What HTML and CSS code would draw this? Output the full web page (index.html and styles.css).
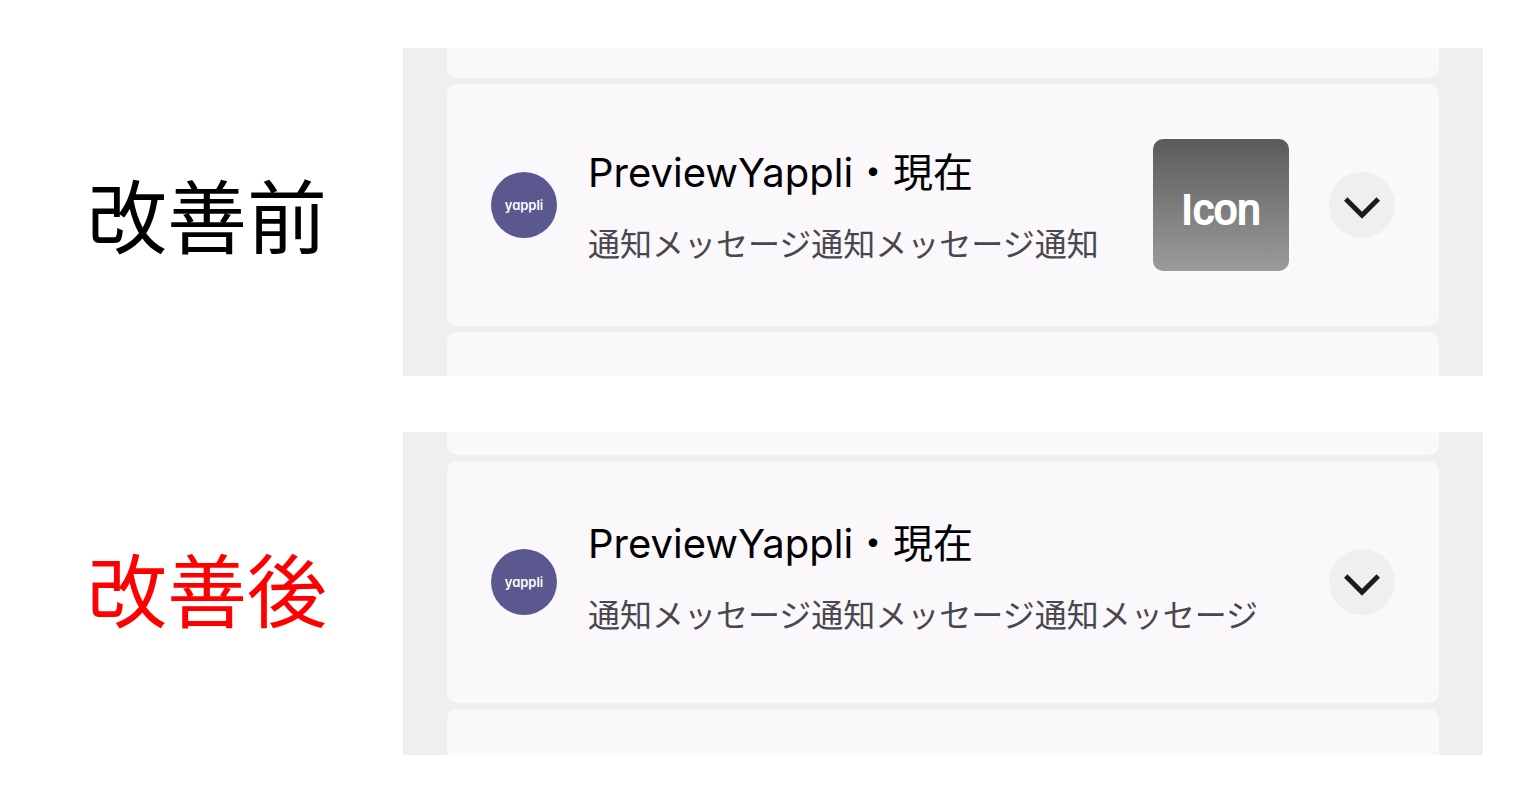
FILE: index.html
```html
<!DOCTYPE html>
<html lang="ja">
<head>
<meta charset="utf-8">
<title>改善前・改善後</title>
<link rel="stylesheet" href="styles.css">
</head>
<body>
<main class="comparison">
  <section class="case case-before">
    <h2 class="label">改善前</h2>
    <div class="panel">
      <div class="stub stub-top"></div>
      <article class="card">
        <span class="avatar">yappli</span>
        <div class="texts">
          <h3 class="title">PreviewYappli・現在</h3>
          <p class="message">通知メッセージ通知メッセージ通知</p>
        </div>
        <div class="thumb">Icon</div>
        <button class="expand" type="button" aria-label="展開">
          <svg class="chevron" viewBox="0 0 36 22"><path d="M1.700 2 18 18.300 34.300 2"/></svg>
        </button>
      </article>
      <div class="stub stub-bottom"></div>
    </div>
  </section>
  <section class="case case-after">
    <h2 class="label">改善後</h2>
    <div class="panel">
      <div class="stub stub-top"></div>
      <article class="card">
        <span class="avatar">yappli</span>
        <div class="texts">
          <h3 class="title">PreviewYappli・現在</h3>
          <p class="message">通知メッセージ通知メッセージ通知メッセージ</p>
        </div>
        <button class="expand" type="button" aria-label="展開">
          <svg class="chevron" viewBox="0 0 36 22"><path d="M1.700 2 18 18.300 34.300 2"/></svg>
        </button>
      </article>
      <div class="stub stub-bottom"></div>
    </div>
  </section>
</main>
</body>
</html>
```
FILE: styles.css
```css
* { box-sizing: border-box; }
body {
  margin: 0;
  background: #fff;
  color: #000;
  font-family: Inter, "Noto Sans CJK JP", sans-serif;
}
.comparison {
  display: flex;
  flex-direction: column;
  gap: 56px;
  padding: 48px 46px 56px 87px;
}
.case {
  display: grid;
  grid-template-columns: 316px 1fr;
}
.label {
  margin: 0;
  font-size: 80px;
  line-height: 96px;
  font-weight: 400;
  padding-top: 122px;
}
.case-after .label { color: #f00; padding-top: 112px; }
.panel {
  display: flex;
  flex-direction: column;
  gap: 6px;
  padding: 0 44px;
  background: #f0eef1;
}
.stub, .card { background: #faf8fb; }
.stub-top { height: 30px; border-radius: 0 0 10px 10px; }
.stub-bottom { height: 44px; border-radius: 10px 10px 0 0; }
.case-after .stub-top { height: 23px; }
.case-after .stub-bottom { height: 46px; }
.card {
  display: flex;
  align-items: center;
  min-height: 242px;
  padding: 0 44px;
  border-radius: 10px;
}
.avatar {
  flex: none;
  display: grid;
  place-items: center;
  width: 66px;
  height: 66px;
  margin-right: 31px;
  border-radius: 50%;
  background: #5b578f;
  color: #fff;
  font-size: 13px;
  line-height: 16px;
  font-weight: 600;
  font-feature-settings: "cv11";
}
.texts { flex: 1; min-width: 0; padding-top: 8px; }
.case-after .texts { padding: 0 0 4px; }
.title {
  margin: 0;
  font-size: 40px;
  line-height: 56px;
  font-weight: 400;
}
.message {
  margin: 16px 0 0;
  color: #49474e;
  font-size: 32px;
  line-height: 56px;
  white-space: nowrap;
}
.thumb {
  flex: none;
  display: grid;
  place-items: center;
  width: 136px;
  height: 132px;
  padding-top: 10px;
  margin-right: 40px;
  border-radius: 10px;
  background: linear-gradient(#5b5b5b, #9b9b9b);
  color: #fff;
  font-family: "Liberation Sans", sans-serif;
  font-size: 42px;
  line-height: 48px;
  -webkit-text-stroke: 2px #fff;
}
.expand {
  flex: none;
  display: grid;
  place-items: center;
  width: 66px;
  height: 66px;
  padding: 6px 0 0;
  border: 0;
  border-radius: 50%;
  background: #f0eef1;
}
.chevron {
  width: 36px;
  height: 22px;
  fill: none;
  stroke: #1c1b1d;
  stroke-width: 5;
}
```
